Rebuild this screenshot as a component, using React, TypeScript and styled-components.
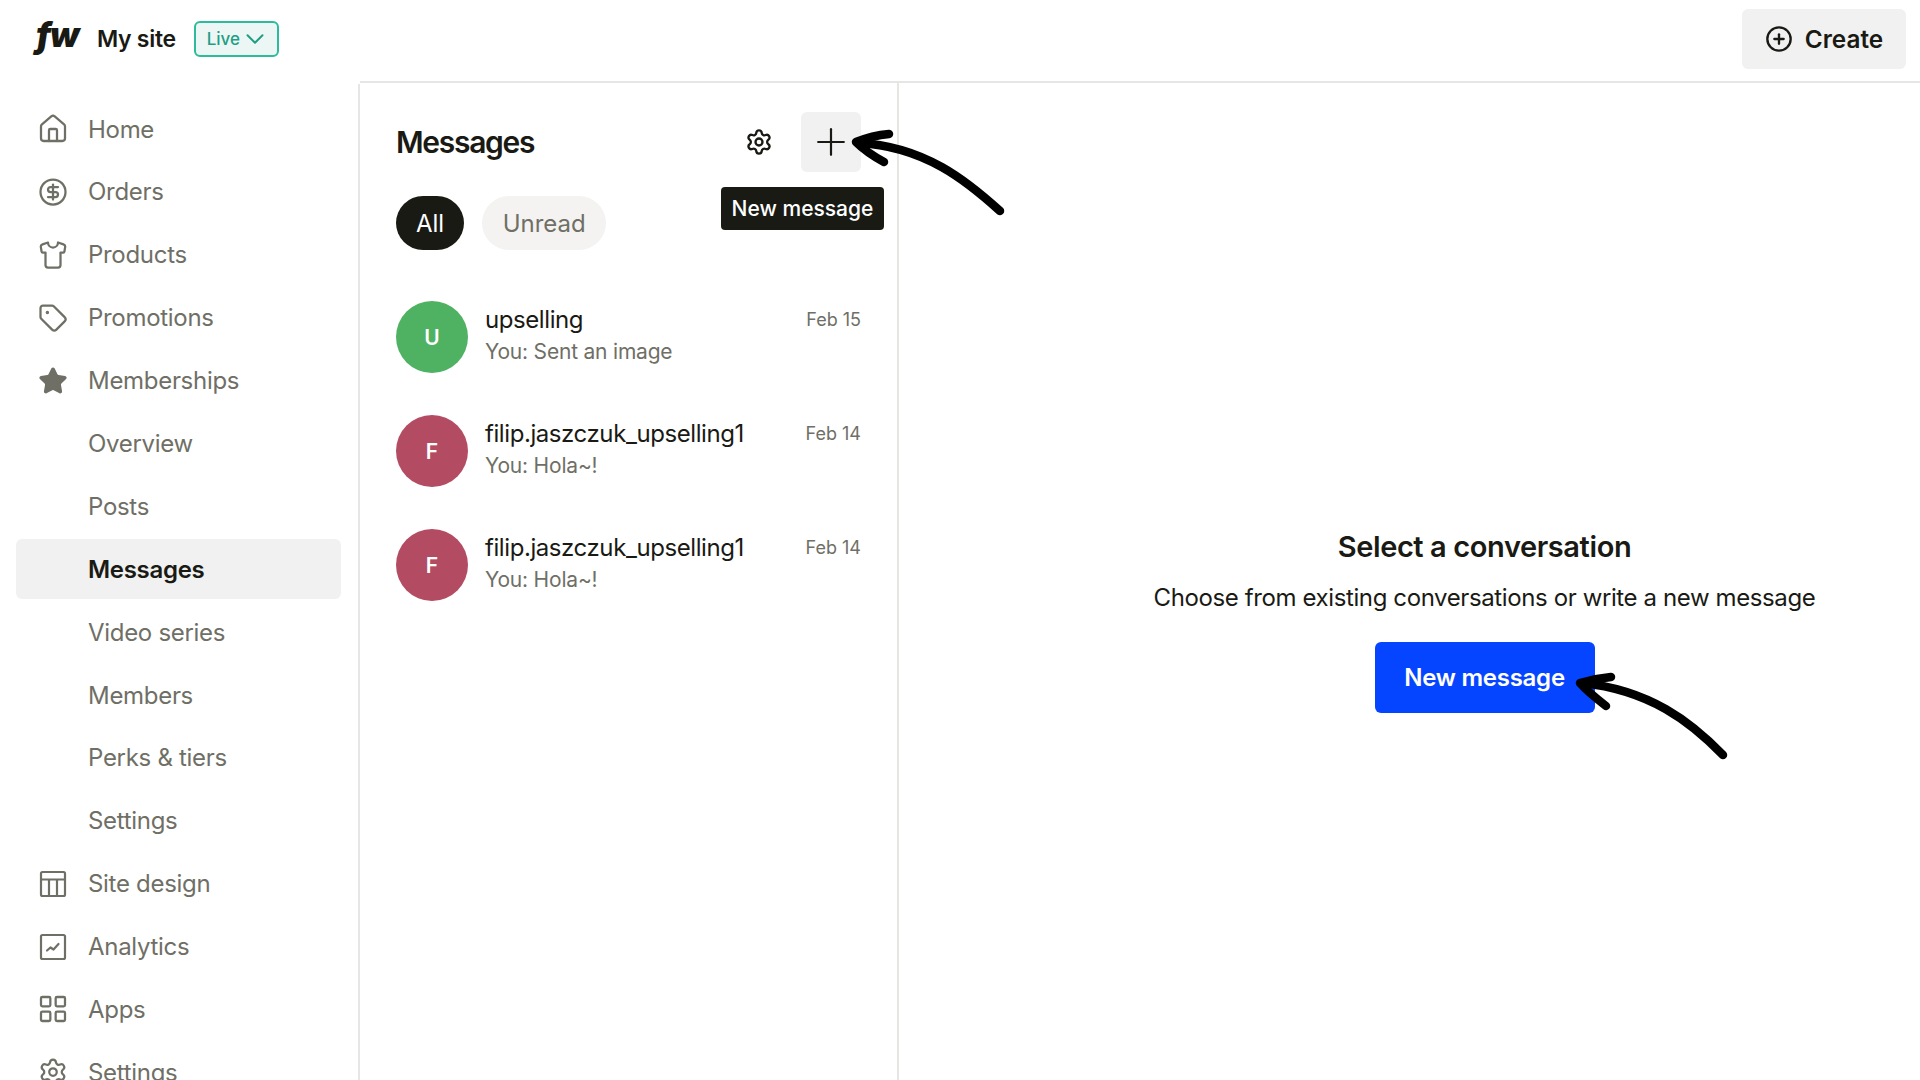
import styled, { createGlobalStyle } from 'styled-components';
import { ChevronDown, CirclePlus, CircleDollarSign, House, LayoutGrid, Plus, Settings, Shirt, Star, Tag } from 'lucide-react';
import type { ReactNode } from 'react';

const GlobalStyle = createGlobalStyle`
	html, body { margin: 0; padding: 0; background: #fff; }
	body { font-family: Inter, "Liberation Sans", sans-serif; color: #1a1a15; }
	* { box-sizing: border-box; }
`;

const Page = styled.div`
	position: relative;
	display: flex;
	width: 1920px;
	height: 1080px;
	overflow: hidden;
	background: #fff;
`;

const Sidebar = styled.aside`
	flex: 0 0 360px;
	display: flex;
	flex-direction: column;
`;

const Brand = styled.div`
	flex: 0 0 84px;
	display: flex;
	align-items: center;
	padding: 0 0 6px 36px;
`;

const Logo = styled.span`
	width: 61px;
	font-size: 34px;
	font-weight: 900;
	font-style: italic;
	letter-spacing: -2px;
	line-height: 1;
	margin-top: -8px;
`;

const SiteName = styled.span`
	font-size: 23px;
	font-weight: 600;
	letter-spacing: -0.3px;
	margin-right: 18px;
`;

const LiveBadge = styled.span`
	display: flex;
	align-items: center;
	justify-content: center;
	gap: 4px;
	width: 85px;
	height: 36px;
	border: 2px solid #2cbb9c;
	border-radius: 6px;
	background: #ecf7f5;
	color: #1f9e85;
	font-size: 17px;
	font-weight: 500;

	svg {
		margin: -4px;
	}
`;

const Nav = styled.nav`
	flex: 1;
	min-height: 0;
	display: flex;
	flex-direction: column;
	gap: 2.9px;
	padding: 15px 17px 0 16px;
	border-right: 2px solid #e6e6e4;
`;

const NavRow = styled.div<{ $active?: boolean }>`
	flex: 0 0 60px;
	display: flex;
	align-items: center;
	gap: 19px;
	padding-left: 21px;
	border-radius: 6px;
	font-size: 24px;
	letter-spacing: -0.3px;
	font-weight: ${(p) => (p.$active ? 600 : 400)};
	color: ${(p) => (p.$active ? '#1a1a15' : '#6f6f66')};
	background: ${(p) => (p.$active ? '#f1f1f1' : 'transparent')};
`;

const NavIcon = styled.span`
	display: flex;
	align-items: center;
	justify-content: center;
	flex: 0 0 32px;
	height: 32px;
	color: #6f6f66;
`;

const Main = styled.div`
	flex: 1;
	display: flex;
	flex-direction: column;
	min-width: 0;
`;

const TopBar = styled.header`
	flex: 0 0 83px;
	display: flex;
	justify-content: flex-end;
	padding: 9px 14px 0 0;
	border-bottom: 2px solid #e6e6e4;
`;

const CreateButton = styled.button`
	display: flex;
	align-items: center;
	justify-content: center;
	gap: 12px;
	width: 164px;
	height: 60px;
	border: 0;
	border-radius: 6px;
	background: #f1f1f1;
	color: #1a1a15;
	font-family: inherit;
	font-size: 24.3px;
	font-weight: 600;
`;

const Content = styled.div`
	flex: 1;
	display: flex;
	min-height: 0;
`;

const ListPane = styled.section`
	flex: 0 0 539px;
	padding: 29px 36px 0 36px;
	border-right: 2px solid #e6e6e4;
`;

const ListHeader = styled.div`
	display: flex;
	align-items: center;
	justify-content: space-between;
	height: 60px;
`;

const ListTitle = styled.h2`
	margin: 0;
	font-size: 30px;
	font-weight: 600;
	letter-spacing: -1.3px;
`;

const HeaderActions = styled.div`
	display: flex;
	align-items: center;
	gap: 27px;
`;

const GearButton = styled.div`
	display: flex;
	align-items: center;
	justify-content: center;
	width: 30px;
	height: 60px;
`;

const AddButton = styled.div`
	position: relative;
	display: flex;
	align-items: center;
	justify-content: center;
	width: 60px;
	height: 60px;
	border-radius: 6px;
	background: #f1f1f1;
`;

const Tooltip = styled.div`
	position: absolute;
	top: 75px;
	right: -23px;
	display: flex;
	align-items: center;
	justify-content: center;
	width: 163px;
	height: 43px;
	border-radius: 4px;
	background: #1a1a15;
	color: #fff;
	font-size: 21px;
	font-weight: 500;
	white-space: nowrap;
`;

const Filters = styled.div`
	display: flex;
	gap: 18px;
	margin-top: 24px;
`;

const FilterPill = styled.div<{ $selected?: boolean }>`
	display: flex;
	align-items: center;
	height: 54px;
	padding: 0 ${(p) => (p.$selected ? '20px' : '20.5px')};
	border-radius: 27px;
	background: ${(p) => (p.$selected ? '#1a1a15' : '#f4f3f1')};
	color: ${(p) => (p.$selected ? '#fff' : '#6f6f66')};
	font-size: 24px;
`;

const ConversationList = styled.div`
	display: flex;
	flex-direction: column;
	gap: 42px;
	margin-top: 51px;
`;

const Conversation = styled.div`
	display: flex;
	align-items: flex-start;
	gap: 17px;
	height: 72px;
`;

const Avatar = styled.div<{ $color: string }>`
	flex: 0 0 72px;
	display: flex;
	align-items: center;
	justify-content: center;
	height: 72px;
	border-radius: 50%;
	background: ${(p) => p.$color};
	color: #fff;
	font-size: 21px;
	font-weight: 600;
`;

const ConversationBody = styled.div`
	flex: 1;
	min-width: 0;
	padding-top: 2px;
`;

const ConversationName = styled.div`
	font-size: 24px;
	letter-spacing: -0.42px;
	line-height: 34px;
`;

const ConversationPreview = styled.div`
	margin-top: -1px;
	font-size: 21px;
	letter-spacing: -0.2px;
	line-height: 32px;
	color: #6f6f66;
`;

const ConversationDate = styled.div`
	padding-top: 2px;
	font-size: 18px;
	line-height: 34px;
	color: #6f6f66;
`;

const EmptyPane = styled.section`
	flex: 1;
	display: flex;
	flex-direction: column;
	align-items: center;
	padding: 444px 0 0 150px;
`;

const EmptyTitle = styled.h3`
	margin: 0;
	font-size: 29px;
	line-height: 40px;
	font-weight: 600;
	letter-spacing: -0.4px;
`;

const EmptyText = styled.p`
	margin: 13px 0 0;
	font-size: 24px;
	letter-spacing: -0.39px;
	line-height: 36px;
`;

const PrimaryButton = styled.button`
	width: 220px;
	height: 71px;
	margin-top: 26px;
	border: 0;
	border-radius: 6px;
	background: #0545ff;
	color: #fff;
	font-family: inherit;
	font-size: 24px;
	letter-spacing: -0.25px;
	font-weight: 600;
`;

const Annotations = styled.svg`
	position: absolute;
	inset: 0;
	width: 1920px;
	height: 1080px;
	pointer-events: none;
`;

const SiteDesignIcon = () => (
	<svg width='32' height='32' viewBox='0 0 32 32' fill='none' stroke='currentColor' strokeWidth='2.2' strokeLinejoin='round'>
		<rect x='4' y='4' width='24' height='24' rx='1.5' />
		<path d='M4 11.5h24M12 11.5V28M20 11.5V28' />
	</svg>
);

const AnalyticsIcon = () => (
	<svg width='32' height='32' viewBox='0 0 32 32' fill='none' stroke='currentColor' strokeWidth='2.2' strokeLinejoin='round' strokeLinecap='round'>
		<rect x='4' y='4' width='24' height='24' rx='1.5' />
		<path d='M10 19.5l3.5-3 3 2 5-5.5' />
	</svg>
);

type NavEntry = { label: string; icon?: ReactNode; active?: boolean };

const wideIcon = { size: 32, strokeWidth: 1.7 };
const roundIcon = { size: 30, strokeWidth: 1.8 };

const navItems: NavEntry[] = [
	{ label: 'Home', icon: <House {...wideIcon} /> },
	{ label: 'Orders', icon: <CircleDollarSign {...roundIcon} /> },
	{ label: 'Products', icon: <Shirt {...roundIcon} /> },
	{ label: 'Promotions', icon: <Tag {...roundIcon} /> },
	{ label: 'Memberships', icon: <Star {...roundIcon} fill='currentColor' /> },
	{ label: 'Overview' },
	{ label: 'Posts' },
	{ label: 'Messages', active: true },
	{ label: 'Video series' },
	{ label: 'Members' },
	{ label: 'Perks & tiers' },
	{ label: 'Settings' },
	{ label: 'Site design', icon: <SiteDesignIcon /> },
	{ label: 'Analytics', icon: <AnalyticsIcon /> },
	{ label: 'Apps', icon: <LayoutGrid {...wideIcon} /> },
	{ label: 'Settings', icon: <Settings {...roundIcon} /> },
];

const conversations = [
	{ initial: 'U', name: 'upselling', preview: 'You: Sent an image', date: 'Feb 15', color: '#4fb263' },
	{ initial: 'F', name: 'filip.jaszczuk_upselling1', preview: 'You: Hola~!', date: 'Feb 14', color: '#b34c62' },
	{ initial: 'F', name: 'filip.jaszczuk_upselling1', preview: 'You: Hola~!', date: 'Feb 14', color: '#b34c62' },
];

export default function App() {
	return (
		<Page>
			<GlobalStyle />
			<Sidebar>
				<Brand>
					<Logo>fw</Logo>
					<SiteName>My site</SiteName>
					<LiveBadge>
						Live
						<ChevronDown size={30} strokeWidth={1.6} />
					</LiveBadge>
				</Brand>
				<Nav>
					{navItems.map((item, index) => (
						<NavRow key={index} $active={item.active}>
							<NavIcon>{item.icon}</NavIcon>
							{item.label}
						</NavRow>
					))}
				</Nav>
			</Sidebar>
			<Main>
				<TopBar>
					<CreateButton>
						<CirclePlus size={28} strokeWidth={2} />
						Create
					</CreateButton>
				</TopBar>
				<Content>
					<ListPane>
						<ListHeader>
							<ListTitle>Messages</ListTitle>
							<HeaderActions>
								<GearButton>
									<Settings size={28} strokeWidth={2} />
								</GearButton>
								<AddButton>
									<Plus size={44} strokeWidth={1.2} />
									<Tooltip>New message</Tooltip>
								</AddButton>
							</HeaderActions>
						</ListHeader>
						<Filters>
							<FilterPill $selected>All</FilterPill>
							<FilterPill>Unread</FilterPill>
						</Filters>
						<ConversationList>
							{conversations.map((conversation, index) => (
								<Conversation key={index}>
									<Avatar $color={conversation.color}>{conversation.initial}</Avatar>
									<ConversationBody>
										<ConversationName>{conversation.name}</ConversationName>
										<ConversationPreview>{conversation.preview}</ConversationPreview>
									</ConversationBody>
									<ConversationDate>{conversation.date}</ConversationDate>
								</Conversation>
							))}
						</ConversationList>
					</ListPane>
					<EmptyPane>
						<EmptyTitle>Select a conversation</EmptyTitle>
						<EmptyText>Choose from existing conversations or write a new message</EmptyText>
						<PrimaryButton>New message</PrimaryButton>
					</EmptyPane>
				</Content>
			</Main>
			<Annotations viewBox='0 0 1920 1080' fill='none' stroke='#000' strokeWidth='8.5' strokeLinecap='round' strokeLinejoin='round'>
				<path d='M1000 211C968 182 925 146 858 143' />
				<path d='M889 134C878 135 866 138 856 142C863 149 873 156 884 162' />
				<path d='M1723 755C1691 722 1650 690 1582 683' />
				<path d='M1611 677C1600 678 1590 680 1580 683C1587 691 1597 699 1606 706' />
			</Annotations>
		</Page>
	);
}
